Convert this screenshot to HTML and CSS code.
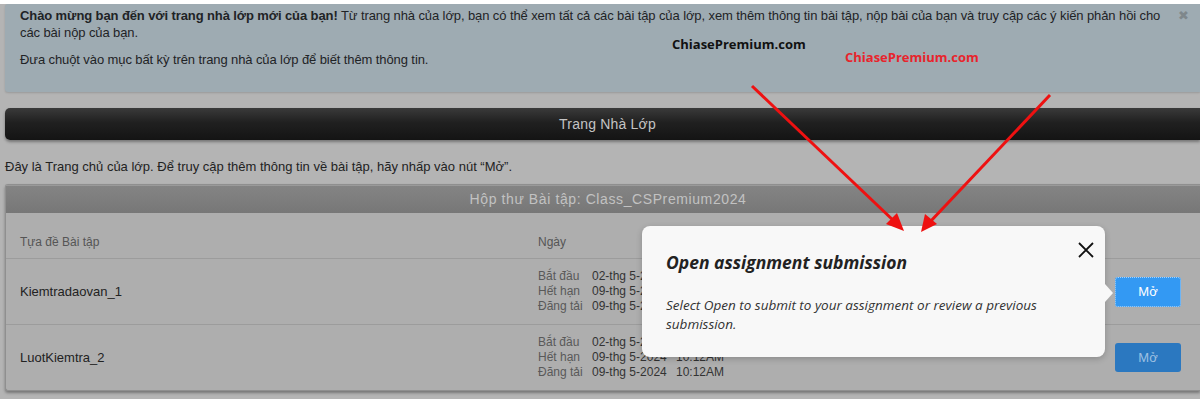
FILE: index.html
```html
<!DOCTYPE html>
<html lang="vi">
<head>
    <meta charset="UTF-8">
    <meta name="viewport" content="width=device-width, initial-scale=1.0">
    <title>Trang Nhà Lớp</title>
    <link rel="stylesheet" href="styles.css">
</head>
<body>
    <div class="page">
        <!-- Welcome notice -->
        <div class="notice">
            <span class="notice-close">&#10006;</span>
            <p><b>Chào mừng bạn đến với trang nhà lớp mới của bạn!</b> Từ trang nhà của lớp, bạn có thể xem tất cả các bài tập của lớp, xem thêm thông tin bài tập, nộp bài của bạn và truy cập các ý kiến phản hồi cho các bài nộp của bạn.</p>
            <p>Đưa chuột vào mục bất kỳ trên trang nhà của lớp để biết thêm thông tin.</p>
        </div>

        <div class="title-bar">Trang Nhà Lớp</div>

        <p class="intro">Đây là Trang chủ của lớp. Để truy cập thêm thông tin về bài tập, hãy nhấp vào nút “Mở”.</p>

        <!-- Assignment inbox -->
        <div class="inbox">
            <div class="inbox-head">Hộp thư Bài tập: Class_CSPremium2024</div>
            <div class="row row-head">
                <div class="col-title">Tựa đề Bài tập</div>
                <div class="col-date">Ngày</div>
                <div class="col-action"></div>
            </div>
            <div class="row">
                <div class="col-title name">Kiemtradaovan_1</div>
                <div class="col-date">
                    <div class="dates">
                        <span class="lbl">Bắt đầu</span><span>02-thg 5-2024</span><span>10:12AM</span>
                        <span class="lbl">Hết hạn</span><span>09-thg 5-2024</span><span>10:12AM</span>
                        <span class="lbl">Đăng tải</span><span>09-thg 5-2024</span><span>10:12AM</span>
                    </div>
                </div>
                <div class="col-action"><button class="open-btn active">Mở</button></div>
            </div>
            <div class="row">
                <div class="col-title name">LuotKiemtra_2</div>
                <div class="col-date">
                    <div class="dates">
                        <span class="lbl">Bắt đầu</span><span>02-thg 5-2024</span><span>10:12AM</span>
                        <span class="lbl">Hết hạn</span><span>09-thg 5-2024</span><span>10:12AM</span>
                        <span class="lbl">Đăng tải</span><span>09-thg 5-2024</span><span>10:12AM</span>
                    </div>
                </div>
                <div class="col-action"><button class="open-btn">Mở</button></div>
            </div>
        </div>

        <!-- Tooltip over the first Open button -->
        <div class="popover">
            <svg class="popover-close" width="16" height="16" viewBox="0 0 16 16">
                <path d="M1 1 L15 15 M15 1 L1 15" stroke="#111" stroke-width="1.8" fill="none"/>
            </svg>
            <h3>Open assignment submission</h3>
            <p>Select Open to submit to your assignment or review a previous submission.</p>
        </div>

        <!-- Watermarks and arrows -->
        <div class="mark mark-black">ChiasePremium.com</div>
        <div class="mark mark-red">ChiasePremium.com</div>
        <svg class="arrows" width="1200" height="399" viewBox="0 0 1200 399">
            <g stroke="#ee1111" stroke-width="3" fill="none">
                <line x1="752" y1="86" x2="895" y2="222"/>
                <line x1="1050" y1="95" x2="929" y2="223"/>
            </g>
            <g fill="#ee1111">
                <polygon points="904,231 886,224 897,213"/>
                <polygon points="921,232 925,214 937,224"/>
            </g>
        </svg>
    </div>
</body>
</html>
```

FILE: styles.css
```css
body {
    margin: 0;
    background: #b4b4b4;
    font-family: "Liberation Sans", Arial, sans-serif;
    font-size: 13px;
    color: #222;
}
.page {
    position: relative;
    border-top: 4px solid #fff;
    height: 395px;
    overflow: hidden;
}

/* welcome notice */
.notice {
    position: relative;
    margin-left: 5px;
    padding: 3px 18px 24px 15px;
    background: #9eabb2;
    border-radius: 3px 0 0 3px;
    box-shadow: 0 1px 2px rgba(0, 0, 0, 0.15);
    letter-spacing: -0.1px;
}
.notice p {
    margin: 0;
    line-height: 17px;
    color: #1f2326;
}
.notice p + p {
    margin-top: 10px;
}
.notice-close {
    position: absolute;
    top: 4px;
    right: 11px;
    font-size: 13px;
    color: #7f878b;
}

/* dark title bar */
.title-bar {
    margin: 16px 0 0 5px;
    height: 32px;
    line-height: 32px;
    text-align: center;
    font-size: 14px;
    color: #c4c4c4;
    padding-left: 10px;
    letter-spacing: 0.2px;
    background: linear-gradient(to bottom, #3a3a3a 0%, #202020 45%, #141414 100%);
    border-radius: 5px 0 0 5px;
    box-shadow: 0 2px 3px rgba(0, 0, 0, 0.35);
}

.intro {
    margin: 18px 0 0 5px;
    line-height: 17px;
    color: #222;
}

/* assignment inbox */
.inbox {
    margin: 9px 0 0 5px;
    background: #aeaeae;
    border: 1px solid #8f8f8f;
    border-right: none;
    border-radius: 3px 0 0 3px;
    box-shadow: 0 2px 3px rgba(0, 0, 0, 0.35);
}
.inbox-head {
    height: 27px;
    line-height: 27px;
    text-align: center;
    font-size: 14px;
    letter-spacing: 0.6px;
    color: #c2c2c2;
    background: linear-gradient(to bottom, #848484, #777);
    padding-left: 10px;
    border-top: 1px solid #9a9a9a;
}
.row {
    display: flex;
    align-items: center;
    height: 65px;
    border-top: 1px solid #9c9c9c;
}
.row-head {
    height: 45px;
    border-top: none;
    color: #555;
    font-size: 12px;
}
.row-head .col-title,
.row-head .col-date {
    padding-top: 12px;
}
.col-title {
    width: 518px;
    padding-left: 14px;
}
.col-date {
    flex: 1;
}
.col-action {
    width: 85px;
}
.name {
    font-size: 13px;
    color: #222;
}
.dates {
    display: grid;
    grid-template-columns: 54px 84px auto;
    font-size: 12px;
    line-height: 15px;
    color: #333;
}
.dates .lbl {
    color: #595959;
}
.open-btn {
    display: block;
    width: 66px;
    height: 29px;
    border: none;
    border-radius: 3px;
    background: #2b78c0;
    color: #9ec0e2;
    font-family: "Liberation Sans", Arial, sans-serif;
    font-size: 13px;
}
.open-btn.active {
    position: relative;
    z-index: 2;
    height: 30px;
    background: #3399f3;
    color: #fff;
    outline: 1px dotted #a9d2f7;
    outline-offset: -1px;
}

/* tooltip */
.popover {
    position: absolute;
    left: 642px;
    top: 222px;
    width: 415px;
    height: 131px;
    padding: 0 24px;
    background: #f8f8f8;
    border-radius: 8px;
    font-family: "Open Sans", sans-serif;
    font-style: italic;
    color: #222;
    box-shadow: 0 2px 6px rgba(0, 0, 0, 0.2);
}
.popover::after {
    content: "";
    position: absolute;
    right: -8px;
    top: 58px;
    border-top: 9px solid transparent;
    border-bottom: 9px solid transparent;
    border-left: 8px solid #f8f8f8;
}
.popover h3 {
    margin: 24px 0 0;
    font-size: 17.5px;
    font-weight: 700;
    line-height: 24px;
}
.popover p {
    margin: 22px 0 0;
    font-size: 13.5px;
    line-height: 19px;
    color: #333;
}
.popover-close {
    position: absolute;
    right: 11px;
    top: 16px;
}

/* watermarks */
.mark {
    position: absolute;
    font-family: "Open Sans", sans-serif;
    font-weight: 700;
    font-size: 13px;
}
.mark-black {
    left: 672px;
    top: 31px;
    color: #111;
}
.mark-red {
    left: 845px;
    top: 44px;
    color: #e8242c;
}
.arrows {
    position: absolute;
    left: 0;
    top: -4px;
}
```
